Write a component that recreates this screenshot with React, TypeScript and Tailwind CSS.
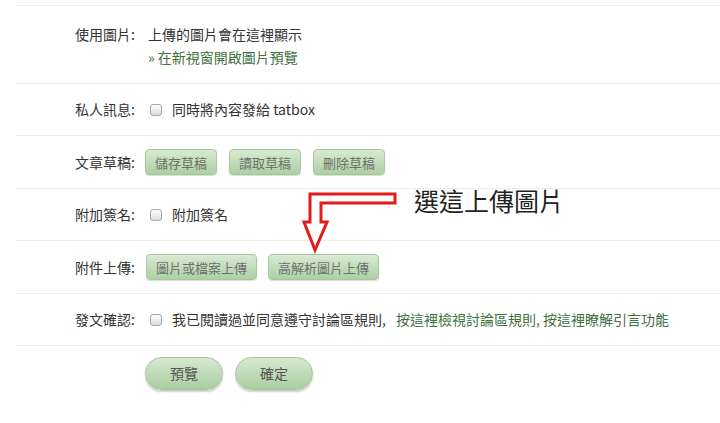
import React from "react";

const font = { fontFamily: '"Noto Sans CJK TC", "Noto Sans", sans-serif' };

function Label({ children }: { children: React.ReactNode }) {
  return <div className="w-[120px] shrink-0 text-right text-[14px] text-[#333]">{children}</div>;
}

function GBtn({ children }: { children: React.ReactNode }) {
  return (
    <button className="h-[26px] rounded-[4px] border border-[#a7c79e] bg-gradient-to-b from-[#d8ead2] to-[#acd0a2] px-[9px] text-[13px] leading-none text-[#707070] shadow-[0_1px_1px_rgba(0,0,0,0.15)]">
      {children}
    </button>
  );
}

function Check() {
  return (
    <span className="inline-block h-[12px] w-[12px] rounded-[3px] border border-[#a9a9a9] bg-gradient-to-b from-white to-[#dcdcdc]" />
  );
}

export default function App() {
  return (
    <div className="relative h-[423px] w-[720px] overflow-hidden bg-white" style={font}>
      <div className="h-[5px]" />
      <div className="ml-[15px]">
        <div className="flex h-[78px] border-t border-[#ececec] pt-[17px] leading-[23px]">
          <Label>使用圖片:</Label>
          <div className="pl-[13px] text-[14px]">
            <div className="text-[#333]">上傳的圖片會在這裡顯示</div>
            <div className="text-[#3f7140]">» 在新視窗開啟圖片預覽</div>
          </div>
        </div>
        <div className="flex h-[52px] items-center border-t border-[#ececec]">
          <Label>私人訊息:</Label>
          <div className="flex items-center gap-[10px] pl-[15px] text-[14px] text-[#333]">
            <Check />
            <span>同時將內容發給 tatbox</span>
          </div>
        </div>
        <div className="flex h-[53px] items-center border-t border-[#ececec]">
          <Label>文章草稿:</Label>
          <div className="flex items-center gap-[12px] pl-[10px]">
            <GBtn>儲存草稿</GBtn>
            <GBtn>讀取草稿</GBtn>
            <GBtn>刪除草稿</GBtn>
          </div>
        </div>
        <div className="flex h-[52px] items-center border-t border-[#ececec]">
          <Label>附加簽名:</Label>
          <div className="flex items-center gap-[10px] pl-[15px] text-[14px] text-[#333]">
            <Check />
            <span>附加簽名</span>
          </div>
        </div>
        <div className="flex h-[53px] items-center border-t border-[#ececec]">
          <Label>附件上傳:</Label>
          <div className="flex items-center gap-[11px] pl-[11px]">
            <GBtn>圖片或檔案上傳</GBtn>
            <GBtn>高解析圖片上傳</GBtn>
          </div>
        </div>
        <div className="flex h-[52px] items-center border-t border-[#ececec]">
          <Label>發文確認:</Label>
          <div className="flex items-center gap-[10px] pl-[15px] text-[14px]">
            <Check />
            <span className="whitespace-nowrap text-[#333]">
              我已閱讀過並同意遵守討論區規則,
              <span className="ml-[10px] text-[#3f7140]">按這裡檢視討論區規則, 按這裡瞭解引言功能</span>
            </span>
          </div>
        </div>
        <div className="flex gap-[12px] border-t border-[#ececec] pl-[130px] pt-[11px]">
          <button className="h-[33px] w-[78px] rounded-full border border-[#a3c49a] bg-gradient-to-b from-[#d6e9d0] to-[#a9cd9f] text-[14px] text-[#555] shadow-[0_2px_2px_rgba(0,0,0,0.2)]">
            預覽
          </button>
          <button className="h-[33px] w-[78px] rounded-full border border-[#a3c49a] bg-gradient-to-b from-[#d6e9d0] to-[#a9cd9f] text-[14px] text-[#555] shadow-[0_2px_2px_rgba(0,0,0,0.2)]">
            確定
          </button>
        </div>
      </div>

      <svg className="absolute left-0 top-0" width="720" height="423" viewBox="0 0 720 423">
        <polygon
          points="395,194 310,194 310,222 304,222 315,250 327,222 321,222 321,203 395,203"
          fill="white"
          stroke="#e21b1b"
          strokeWidth="3"
          strokeLinejoin="miter"
        />
      </svg>
      <div className="absolute left-[414px] top-[185px] text-[25px] leading-[30px] text-[#222]">選這上傳圖片</div>
    </div>
  );
}
